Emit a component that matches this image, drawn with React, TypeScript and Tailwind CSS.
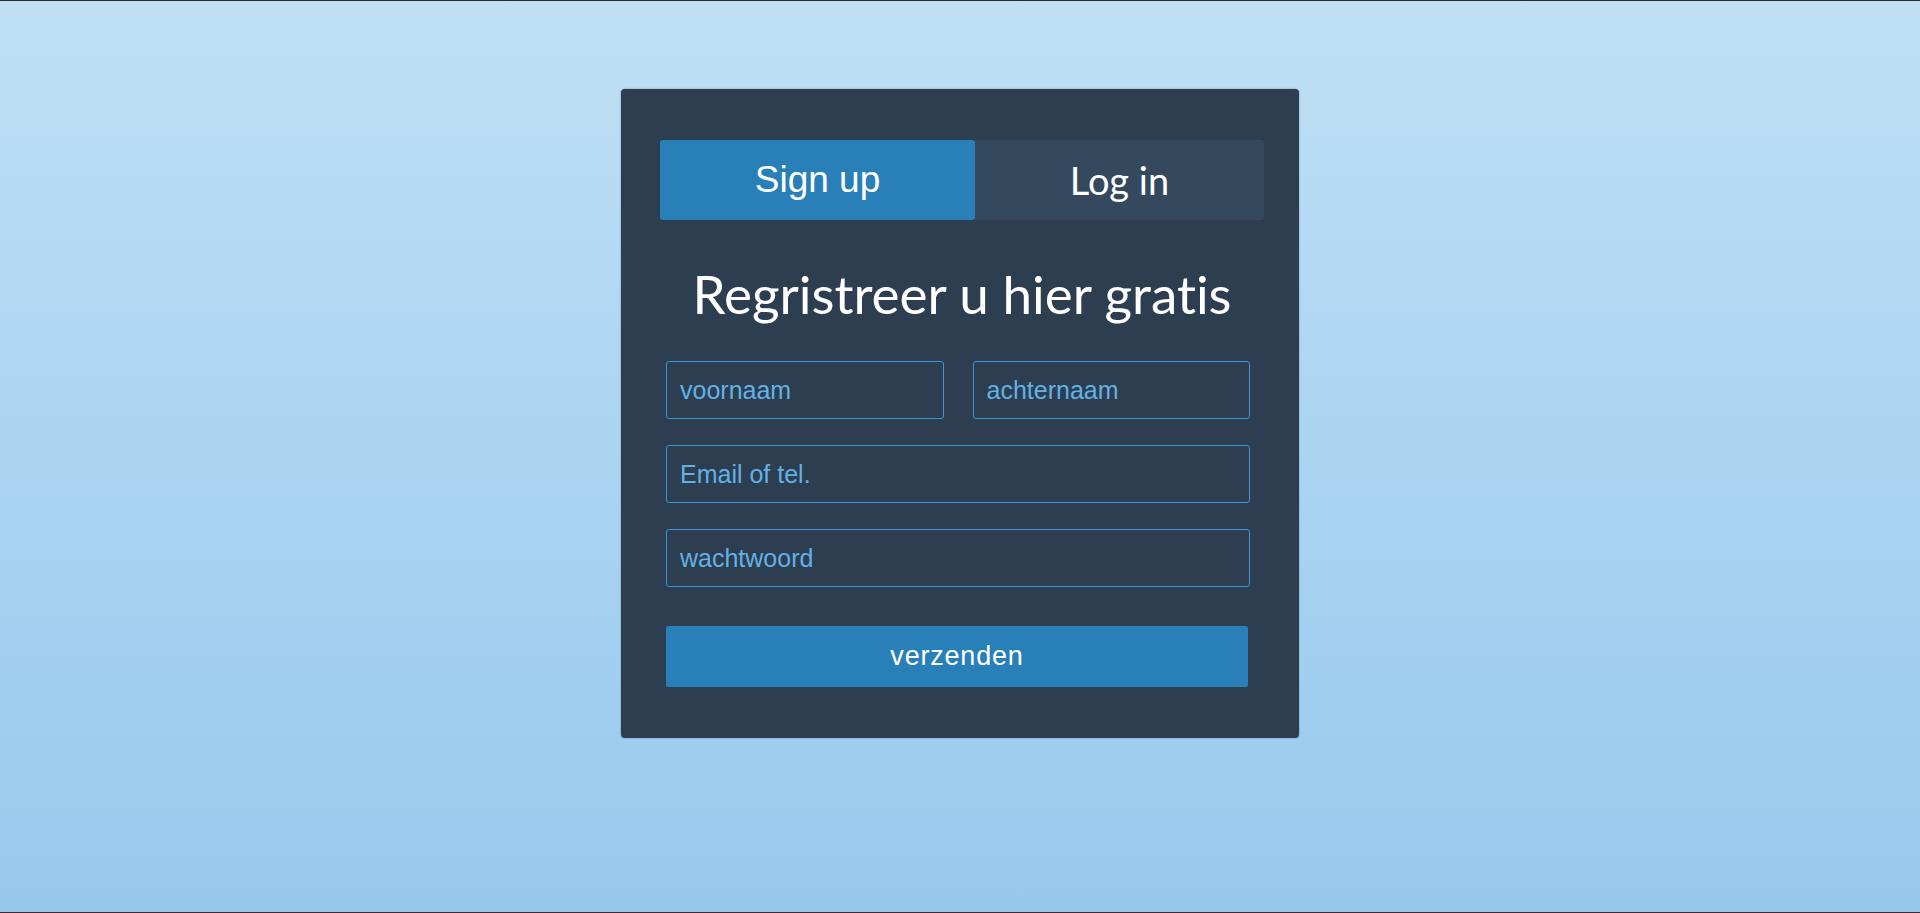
import { useState } from "react";

// Registratiekaart met tabbladen, vier velden en een verzendknop.
export default function App() {
  const [tab, setTab] = useState<"signup" | "login">("signup");

  return (
    <div className="min-h-[913px] w-full border-t border-b border-t-[#2a2a2a] border-b-[#4a2535] bg-gradient-to-b from-[#bfe0f5] to-[#97c9ed] pt-[88px]">
      <div
        className="mx-auto w-[678px] rounded-[4px] bg-[#2c3e50] pl-[39px] pr-[35px] pt-[51px] pb-[51px] shadow-[0_0_2px_rgba(0,0,0,0.35)] [font-variant-ligatures:none]"
        style={{ fontFamily: "Lato, 'Open Sans', sans-serif" }}
      >
        {/* ── Tabbladen ── */}
        <div className="flex h-[80px]">
          <button
            onClick={() => setTab("signup")}
            className="w-[315px] rounded-[3px] bg-[#2980b9] text-[37px] text-white"
            style={{ fontFamily: "'Liberation Sans', Arial, sans-serif" }}
          >
            Sign up
          </button>
          <button
            onClick={() => setTab("login")}
            className="flex-1 rounded-r-[3px] bg-[#34495e] text-[38px] text-white"
          >
            Log in
          </button>
        </div>

        {tab === "signup" && <span className="hidden" />}

        <h1 className="flex h-[141px] items-center justify-center pt-[5px] text-[53px] font-normal leading-none text-white">
          Regristreer u hier gratis
        </h1>

        {/* ── Formulier ── */}
        <form
          className="ml-[6px] mr-[14px] flex flex-col"
          style={{ fontFamily: "'Liberation Sans', Arial, sans-serif" }}
          onSubmit={(e) => e.preventDefault()}
        >
          <div className="grid grid-cols-2 gap-[29px]">
            <input
              placeholder="voornaam"
              className="h-[58px] rounded-[3px] border border-[#3498db] bg-transparent px-[13px] text-[25px] text-white outline-none placeholder:text-[#63b1e5]"
            />
            <input
              placeholder="achternaam"
              className="h-[58px] rounded-[3px] border border-[#3498db] bg-transparent px-[13px] text-[25px] text-white outline-none placeholder:text-[#63b1e5]"
            />
          </div>
          <input
            placeholder="Email of tel."
            className="mt-[26px] h-[58px] rounded-[3px] border border-[#3498db] bg-transparent px-[13px] text-[25px] text-white outline-none placeholder:text-[#63b1e5]"
          />
          <input
            type="password"
            placeholder="wachtwoord"
            className="mt-[26px] h-[58px] rounded-[3px] border border-[#3498db] bg-transparent px-[13px] text-[25px] text-white outline-none placeholder:text-[#63b1e5]"
          />
          <button
            type="submit"
            className="mt-[39px] mr-[2px] h-[61px] rounded-[2px] bg-[#2980b9] text-[27px] tracking-[0.8px] text-white"
          >
            verzenden
          </button>
        </form>
      </div>
    </div>
  );
}
